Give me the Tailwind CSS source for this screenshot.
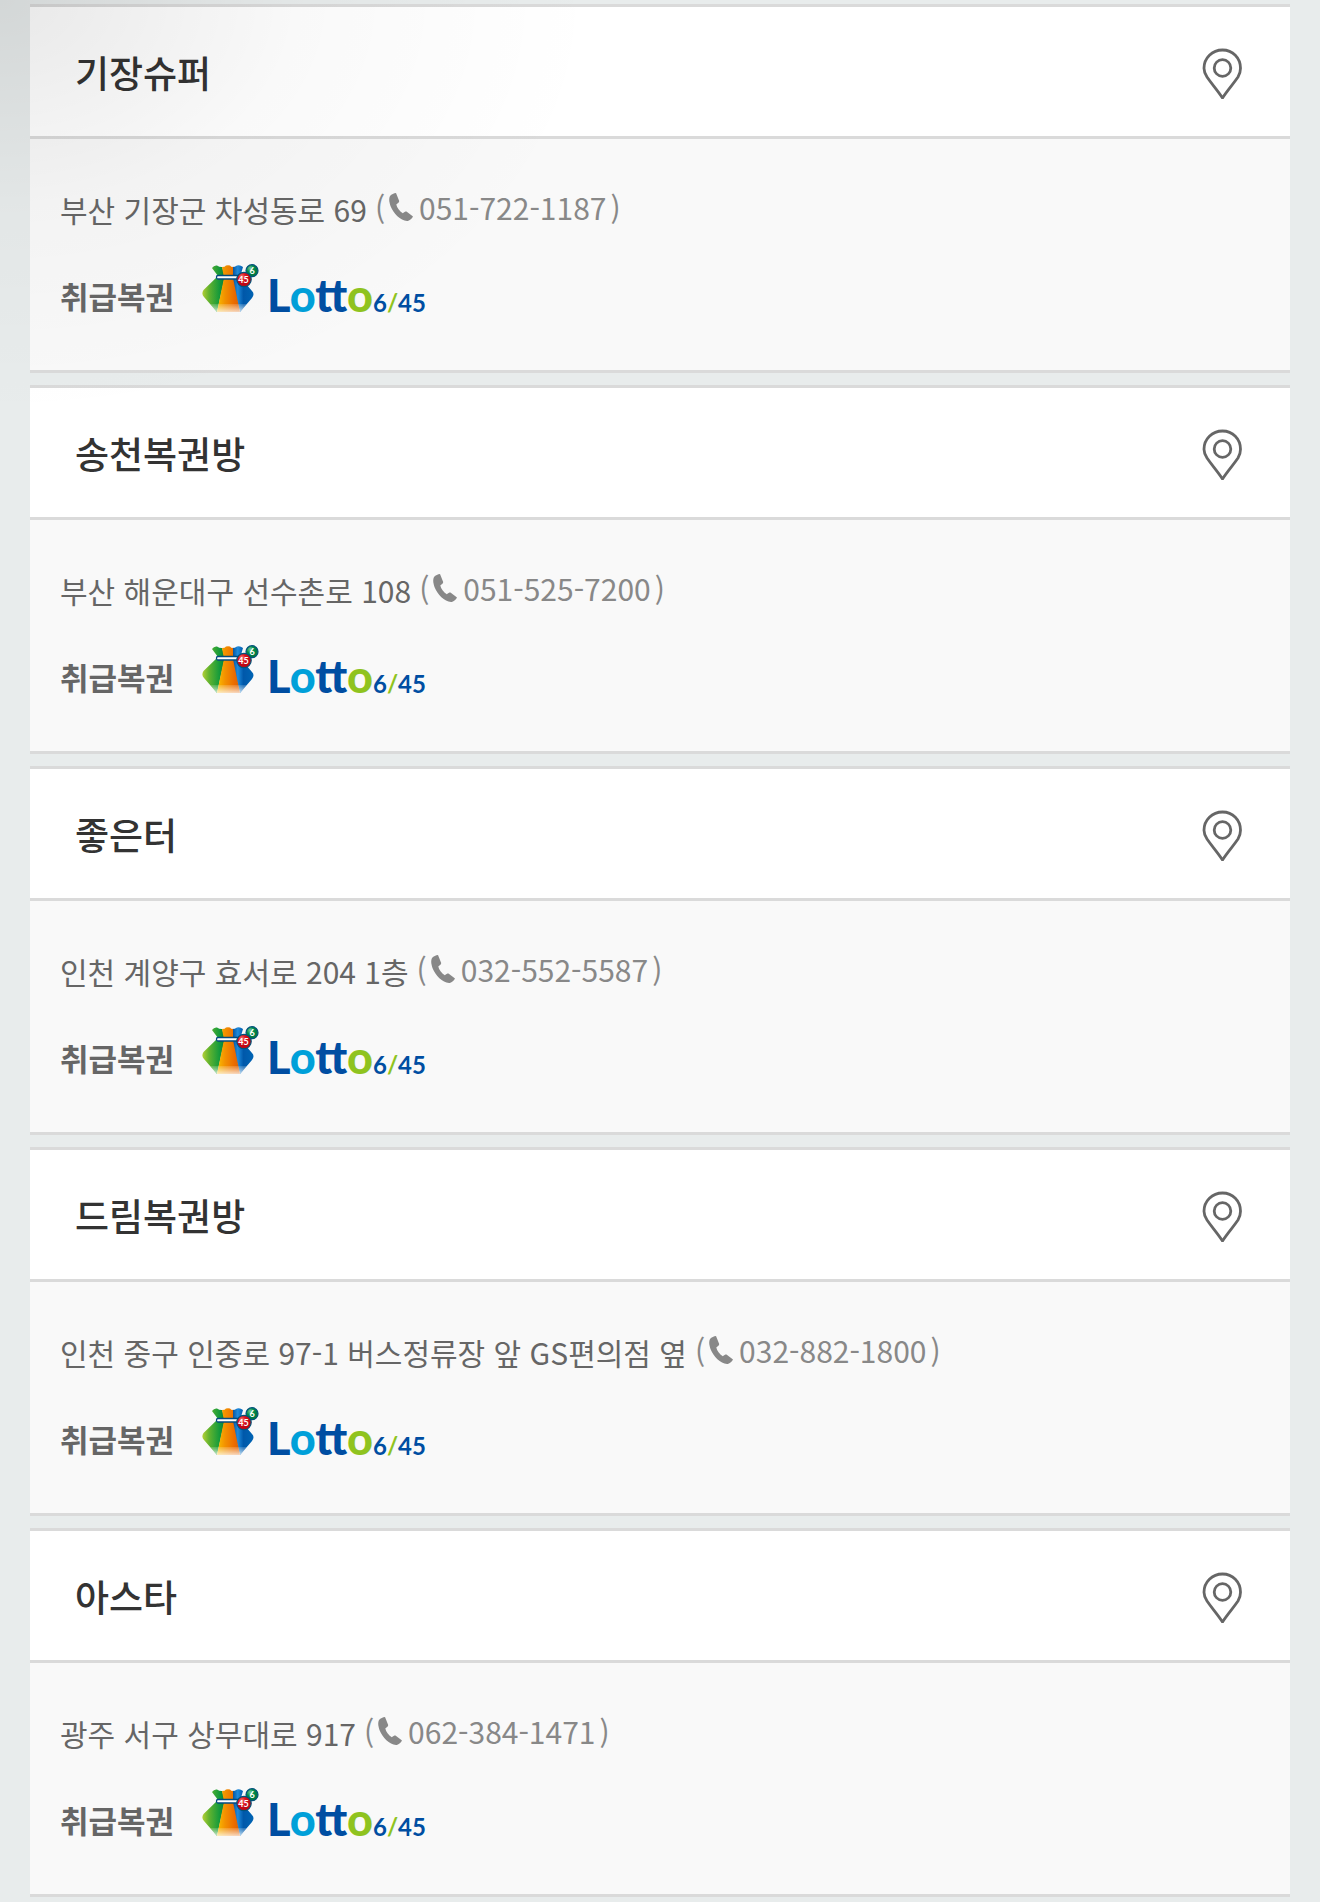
<!DOCTYPE html>
<html lang="ko">
<head>
<meta charset="utf-8">
<meta name="viewport" content="width=device-width, initial-scale=1">
<title>복권 판매점</title>
<script src="https://cdn.jsdelivr.net/npm/@tailwindcss/browser@4"></script>
</head>
<body class="relative min-h-screen bg-[#e8ecec] font-['Noto_Sans_CJK_KR','Noto_Sans',sans-serif] text-[#666]">
<svg class="absolute size-0" aria-hidden="true">
  <defs>
    <linearGradient id="green"><stop offset="0" stop-color="#b4cf35"/><stop offset=".3" stop-color="#62b32f"/><stop offset=".75" stop-color="#159b3b"/><stop offset="1" stop-color="#087b3d"/></linearGradient>
    <linearGradient id="orange"><stop offset="0" stop-color="#f9be00"/><stop offset=".35" stop-color="#f39100"/><stop offset=".75" stop-color="#eb6c00"/><stop offset="1" stop-color="#d96005"/></linearGradient>
    <linearGradient id="blue"><stop offset="0" stop-color="#003f86"/><stop offset=".3" stop-color="#1f8bdc"/><stop offset=".55" stop-color="#0058aa"/><stop offset="1" stop-color="#0064b4"/></linearGradient>
    <linearGradient id="shine" x2="0" y2="1"><stop offset="0" stop-color="#fff" stop-opacity=".15"/><stop offset="1" stop-color="#fff" stop-opacity=".75"/></linearGradient>
    <radialGradient id="red" cx=".35" cy=".3"><stop offset="0" stop-color="#f2807a"/><stop offset=".5" stop-color="#e0141e"/><stop offset="1" stop-color="#c00714"/></radialGradient>
    <radialGradient id="ball" cx=".35" cy=".3"><stop offset="0" stop-color="#7cc79a"/><stop offset=".6" stop-color="#00914d"/><stop offset="1" stop-color="#007a42"/></radialGradient>
  </defs>
</svg>
<ul id="shops" class="flex flex-col gap-3 px-[30px] pt-1 pb-[5px]"></ul>
<div class="pointer-events-none absolute inset-x-0 top-0 h-[420px] bg-[radial-gradient(ellipse_600px_420px_at_0_0,rgb(0_0_0/0.09),rgb(0_0_0/0.025)_50%,transparent)]"></div>
<script>
const shops = [
  ['기장슈퍼', '부산 기장군 차성동로 69', '051-722-1187'],
  ['송천복권방', '부산 해운대구 선수촌로 108', '051-525-7200'],
  ['좋은터', '인천 계양구 효서로 204 1층', '032-552-5587'],
  ['드림복권방', '인천 중구 인중로 97-1 버스정류장 앞 GS편의점 옆', '032-882-1800'],
  ['아스타', '광주 서구 상무대로 917', '062-384-1471'],
];
document.getElementById('shops').innerHTML = shops.map(([name, address, phone]) => `
  <li class="border-y-3 border-[#dadada] bg-[#f9f9f9]">
    <div class="flex h-[132px] items-center justify-between border-b-3 border-[#dadada] bg-white pt-0.5 pr-12 pl-[45px]">
      <h2 class="text-[37px] leading-none font-medium text-[#333]">${name}</h2>
      <button type="button" aria-label="${name} 위치 보기" class="shrink-0">
        <svg class="block h-[52px] w-10" viewBox="0 0 40 52" fill="none" stroke="#666">
          <path stroke-width="2.8" d="M20.500 51 C16.500 44.500 9 36 5 30 C2.800 26.700 2 24.500 2 21.300 C2 10.800 10.300 3 20.500 3 C30.700 3 38.500 10.800 38.500 21.300 C38.500 24.500 38 26.700 36 30 C32 36 24.500 44.500 20.500 51 Z"/>
          <circle cx="20.500" cy="21" r="8.300" stroke-width="2.800"/>
        </svg>
      </button>
    </div>
    <div class="flex min-h-[231px] flex-col gap-8 px-[30px] pt-12">
      <div class="flex h-11 items-center gap-2 whitespace-nowrap">
        <address class="text-[30px] not-italic">${address}</address>
        <span class="flex items-center pb-1 text-[30px] text-[#888]">(
          <a href="tel:${phone}" class="ml-1 flex items-center gap-1.5">
            <svg class="h-7 w-6" viewBox="0 0 24 28" fill="#888" aria-hidden="true"><path d="M1 3 C2.500 1.300 5 .3 7 0 L10.200 8 C10.200 9.200 9 10.300 7.300 11.400 C8 14.500 10.500 18.300 13.800 20.300 C15.500 18.900 16.800 18.200 17.800 18.700 L24 23.500 C23 25.500 21 27.500 18.800 28 C12 28.300 4.500 20.500 1.700 13.500 C.2 9.500 -.4 5.500 1 3 Z"/></svg>
            ${phone}</a><span class="ml-1">)</span></span>
      </div>
      <dl class="flex h-[51px] items-end">
        <dt class="text-[31px] leading-9 font-bold">취급복권</dt>
        <dd class="ml-7 flex items-end gap-2">
          <svg class="h-[50px] w-[57px]" viewBox="0 0 57 50" aria-hidden="true">
            <path fill="url(#green)" d="M10 4 Q12 1 15 1.500 Q17 3 20 3 L23 12 L15 48 L2 33 Q-1 30 1.500 26 L16 12 Z"/>
            <path fill="url(#blue)" d="M30 3 Q33 3 35 1.500 Q38 .5 41 3 L38 13 L50 27 Q53 30 50 34 L38 48 L29 14 Z"/>
            <path fill="url(#orange)" d="M20 3 Q23 3 24 1.500 Q26 .8 28 1.500 Q29 3 31 3 L31 14 L38 48 H15 L22 14 Z"/>
            <path fill="url(#shine)" d="M8 40 H45 L38 48 H15 Z"/>
            <rect x="14.500" y="11.500" width="24" height="3.500" rx="1.500" fill="#fff" stroke="#004b80" stroke-width="1.300"/>
            <circle cx="50" cy="6.700" r="6" fill="url(#ball)" stroke="#00537a" stroke-width="1.200"/>
            <circle cx="42" cy="15.500" r="7.200" fill="url(#red)" stroke="#00537a" stroke-width="1.200"/>
            <text x="50" y="10" text-anchor="middle" font-family="Lato" font-weight="700" font-size="9" fill="#fff">6</text>
            <text x="41.500" y="19" text-anchor="middle" font-family="Lato" font-weight="700" font-size="9" fill="#fff">45</text>
          </svg>
          <span class="flex items-baseline font-['Lato',sans-serif] leading-[22px] text-[#004ea2]">
            <span class="text-[45px] font-black">L<span class="text-[#00a0d9]">o</span>tt<span class="text-[#8fc31f]">o</span></span>
            <span class="text-[24px] font-bold">6<span class="text-[#8fc31f]">/</span>45</span>
          </span>
        </dd>
      </dl>
    </div>
  </li>`).join('');
</script>
</body>
</html>
